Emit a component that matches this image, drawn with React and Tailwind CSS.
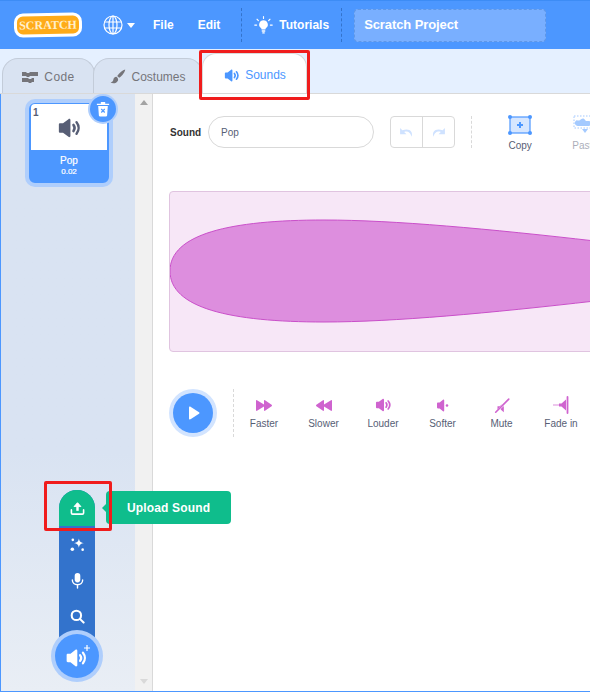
import React from 'react'

const Speaker = ({ className, color = 'currentColor' }) => (
  <svg viewBox="0 0 20 20" className={className} fill="none">
    <path d="M2.200 7.400c0-.6.400-1 1-1h2.200L9.600 3.200c.6-.5 1.500-.1 1.500.7v12.200c0 .8-.9 1.200-1.500.7l-4.200-3.200H3.200c-.6 0-1-.4-1-1z" fill={color} />
    <path d="M13.400 7.600c1.100 1.400 1.100 3.400 0 4.800" stroke={color} strokeWidth="1.900" strokeLinecap="round" />
    <path d="M15.800 5.600c2.100 2.600 2.100 6.200 0 8.800" stroke={color} strokeWidth="1.900" strokeLinecap="round" />
  </svg>
)

const Logo = () => (
  <div className="w-[68px] h-[24px] rounded-[9px] bg-[#ffab19] border-[3px] border-white flex items-center justify-center -rotate-1">
    <span className="text-[12px] leading-none font-bold text-[#fff0cc] font-['Liberation_Serif',serif]">SCRATCH</span>
  </div>
)

const Globe = () => (
  <svg viewBox="0 0 20 20" className="w-5 h-5" fill="none" stroke="white" strokeWidth="1.200">
    <circle cx="10" cy="10" r="9" />
    <ellipse cx="10" cy="10" rx="4" ry="9" />
    <path d="M10 1v18M1.500 7h17M1.500 13h17" />
  </svg>
)

const Bulb = () => (
  <svg viewBox="0 0 20 20" className="w-[19px] h-[19px]" fill="white">
    <path d="M10 4.400a4.600 4.600 0 0 0-2.700 8.300c.5.400.7.900.7 1.400h4c0-.5.200-1 .7-1.400A4.600 4.600 0 0 0 10 4.400z" />
    <rect x="8" y="15" width="4" height="1.500" rx=".7" />
    <rect x="8.600" y="17.200" width="2.800" height="1.300" rx=".6" />
    <path d="M10 .6v2M3.200 3.400l1.400 1.400M16.800 3.400l-1.400 1.400M.8 9.600h2M17.200 9.600h2" stroke="white" strokeWidth="1.200" strokeLinecap="round" />
  </svg>
)

const CodeIcon = () => (
  <svg viewBox="0 0 16 12" className="w-4 h-3" fill="#75757a">
    <path d="M0 1h4l1 1h2l1-1h8v4H8L7 6H5L4 5H0zM0 7h6l1 1h2l1-1h2v4h-2l-1 1H7l-1-1H0z" />
  </svg>
)

const BrushIcon = () => (
  <svg viewBox="0 0 16 16" className="w-4 h-4" fill="#75757a">
    <path d="M15.200.6c-2.400.6-6 3.200-8 6.400l2 1.800c3-2 5.800-5.600 6-8.200z" />
    <path d="M6.400 7.800c-2 .2-2.800 1.400-3 2.800-.2 1.400-1.200 2.600-2.800 3 2.400 1.200 6 .8 7.400-2.200.4-1-.2-2.800-1.600-3.600z" />
  </svg>
)

const effects = [
  {
    label: 'Faster',
    w: 'w-[60px]',
    icon: (
      <svg viewBox="0 0 16 11" className="w-[16px] h-[11px]" fill="#cf63cf">
        <path d="M0 .8C0 .2.500-.1 1 .2l7 4.300V.8C8 .2 8.500-.1 9 .2l6.600 4.500c.5.300.5 1.200 0 1.600L9 10.800c-.5.300-1 0-1-.6V6.500l-7 4.300c-.5.300-1 0-1-.6z" />
      </svg>
    ),
  },
  {
    label: 'Slower',
    w: 'w-[59px]',
    icon: (
      <svg viewBox="0 0 16 11" className="w-[16px] h-[11px]" fill="#cf63cf">
        <path d="M16 .8c0-.6-.5-.9-1-.6L8 4.500V.8C8 .2 7.500-.1 7 .2L.4 4.700c-.5.300-.5 1.200 0 1.600L7 10.800c.5.300 1 0 1-.6V6.500l7 4.300c.5.300 1 0 1-.6z" />
      </svg>
    ),
  },
  {
    label: 'Louder',
    w: 'w-[60px]',
    icon: <Speaker className="w-[18px] h-[18px]" color="#cf63cf" />,
  },
  {
    label: 'Softer',
    w: 'w-[59px]',
    icon: (
      <svg viewBox="0 0 12 13" className="w-[12px] h-[13px]" fill="#cf63cf">
        <path d="M0 4.400c0-.4.300-.8.800-.8h1.800L6 .7c.5-.4 1.200-.1 1.200.6v10.400c0 .7-.7 1-1.200.6L2.600 9.400H.8c-.5 0-.8-.4-.8-.8z" />
        <circle cx="10" cy="6.500" r="1.300" />
      </svg>
    ),
  },
  {
    label: 'Mute',
    w: 'w-[59px]',
    icon: (
      <svg viewBox="0 0 20 20" className="w-[18px] h-[18px]">
        <path d="M5 11.500h2.400L10.500 8.500 5 15z" fill="#cf63cf" />
        <path d="M9 14l3-3v7l-3.500-3z" fill="#cf63cf" />
        <path d="M3 18L17.500 3.500" stroke="#cf63cf" strokeWidth="1.800" strokeLinecap="round" />
      </svg>
    ),
  },
  {
    label: 'Fade in',
    w: 'w-[60px]',
    icon: (
      <svg viewBox="0 0 18 18" className="w-[18px] h-[18px]">
        <path d="M1 9h6" stroke="#e7b4e7" strokeWidth="1.500" />
        <path d="M7 7.500h2.500L14 3.500v11l-4.500-4H7z" fill="#cf63cf" />
        <path d="M15.500 1v16" stroke="#cf63cf" strokeWidth="1.800" strokeLinecap="round" />
      </svg>
    ),
  },
]

const App = () => {
  return (
    <div className="relative w-[590px] h-[692px] overflow-hidden bg-white font-['Liberation_Sans',Arial,sans-serif] flex flex-col">
      {/* menu bar */}
      <header className="h-[49px] shrink-0 bg-[#4c97ff] border-t border-[#3d8cf5] flex items-center text-white font-bold text-[12px]">
        <div className="ml-[14px] w-[68px] flex justify-center"><Logo /></div>
        <div className="ml-[21px] flex items-center gap-[4px]">
          <Globe />
          <span className="w-0 h-0 border-x-[4px] border-x-transparent border-t-[5px] border-t-white" />
        </div>
        <span className="ml-[18px]">File</span>
        <span className="ml-[24px]">Edit</span>
        <div className="ml-[21px] h-[34px] border-l border-dashed border-[#3373cc]" />
        <div className="ml-[12px] flex items-center gap-[6px]">
          <Bulb />
          <span>Tutorials</span>
        </div>
        <div className="ml-[12px] h-[34px] border-l border-dashed border-[#3373cc]" />
        <div className="ml-[12px] w-[192px] h-[33px] rounded-[4px] bg-[#79afff] border border-dashed border-[#5f97e6] flex items-center pl-[9px] text-[13px] tracking-[-0.1px]">Scratch Project</div>
      </header>

      {/* tabs */}
      <div className="h-[45px] shrink-0 bg-[#e5f0ff] flex items-end pl-[2px] border-b border-[#d9d9d9] text-[12px]">
        <div className="w-[93px] h-[35px] bg-[#d9e3f2] border border-b-0 border-[#c3ccd9] rounded-t-[16px] flex items-center justify-center gap-[6px] text-[#75757a] pt-[1px]">
          <CodeIcon />
          <span className="tracking-[0.4px]">Code</span>
        </div>
        <div className="w-[110px] h-[35px] -ml-[2px] bg-[#d9e3f2] border border-b-0 border-[#c3ccd9] rounded-t-[16px] flex items-center justify-center gap-[5px] text-[#75757a] pt-[1px]">
          <BrushIcon />
          <span>Costumes</span>
        </div>
        <div className="w-[105px] h-[40px] -ml-[1px] bg-white border border-b-0 border-[#d9d9d9] rounded-t-[14px] flex items-center justify-center gap-[5px] text-[#4c97ff] pt-[3px]">
          <Speaker className="w-[17px] h-[17px]" color="#4c97ff" />
          <span>Sounds</span>
        </div>
      </div>

      <div className="flex-1 flex min-h-0 border-b border-[#4c97ff]">
        {/* sound list */}
        <aside className="relative w-[135px] shrink-0 bg-gradient-to-b from-[#d9e3f2] from-60% to-[#e9eef5] border-l border-[#4c97ff]">
          <div className="ml-[24px] mt-[5px] w-[88px] h-[88px] rounded-[10px] bg-[#4c97ff] border-[4px] border-[#afcefc] flex flex-col">
            <div className="relative mx-[2px] mt-[1px] h-[46px] bg-white flex items-center justify-center rounded-t-[4px]">
              <span className="absolute left-[2px] top-[4px] text-[10px] leading-none font-bold text-[#575e75]">1</span>
              <Speaker className="w-[26px] h-[26px] mt-[1px]" color="#575e75" />
            </div>
            <div className="flex-1 flex flex-col items-center justify-center text-white pb-[2px] [-webkit-text-stroke:0.2px_white]">
              <span className="text-[10px] leading-[12px]">Pop</span>
              <span className="text-[8px] leading-[10px]">0.02</span>
            </div>
          </div>

          {/* delete badge */}
          <div className="absolute left-[89px] top-[2px] w-[26px] h-[26px] rounded-full bg-[#4c97ff] ring-[2px] ring-[#afcefc] flex items-center justify-center">
            <svg viewBox="0 0 16 18" className="w-[14px] h-[16px]" fill="white">
              <path d="M1 3h14v1.500H1zM5.500 1h5v2h-5z" />
              <path d="M2.500 5.500h11l-.8 11c0 .5-.5 1-1 1H4.300c-.5 0-1-.5-1-1z" />
              <path d="M6 9l4 4M10 9l-4 4" stroke="#4c97ff" strokeWidth="1.400" />
            </svg>
          </div>

          {/* add sound menu */}
          <div className="absolute left-[58px] bottom-[41px] w-[36px] h-[160px] rounded-t-[18px] overflow-hidden bg-[#3373cc] flex flex-col items-center text-white">
            <div className="w-full h-[36px] shrink-0 bg-[#0fbd8c] flex items-center justify-center">
              <svg viewBox="0 0 16 16" className="w-[15px] h-[15px] mt-[1px]" fill="none" stroke="white" strokeWidth="1.700" strokeLinecap="round" strokeLinejoin="round">
                <path d="M1.500 9.500v3.200c0 .8.600 1.300 1.300 1.300h10.400c.7 0 1.300-.5 1.300-1.300V9.500" />
                <path d="M8 10.500V3" strokeWidth="2.600" strokeLinecap="butt" />
                <path d="M4.600 5.600L8 1.800l3.400 3.800z" fill="white" strokeWidth="1" />
              </svg>
            </div>
            <div className="w-full h-[36px] shrink-0 flex items-center justify-center">
              <svg viewBox="0 0 16 16" className="w-[15px] h-[15px]" fill="white">
                <path d="M9.500 1.500c.6 3.200 1.800 4.300 5.500 5-3.700.7-4.900 1.800-5.500 5-.6-3.200-1.800-4.300-5.500-5 3.700-.7 4.900-1.800 5.500-5z" />
                <circle cx="3" cy="3" r="1.400" />
                <circle cx="2.500" cy="13" r="1.900" />
                <circle cx="13.500" cy="13.500" r="1.400" />
              </svg>
            </div>
            <div className="w-full h-[36px] shrink-0 flex items-center justify-center">
              <svg viewBox="0 0 16 18" className="w-[15px] h-[17px]" fill="none" stroke="white" strokeWidth="1.500" strokeLinecap="round">
                <rect x="5" y="1" width="6" height="10" rx="3" fill="white" stroke="none" />
                <path d="M2.500 8.500c0 3 2.400 5 5.500 5s5.500-2 5.500-5M8 13.500V17" />
              </svg>
            </div>
            <div className="w-full h-[36px] shrink-0 flex items-center justify-center">
              <svg viewBox="0 0 16 16" className="w-[15px] h-[15px]" fill="none" stroke="white" strokeWidth="2.200" strokeLinecap="round">
                <circle cx="6.800" cy="6.800" r="5" />
                <path d="M10.800 10.800L14.500 14.500" />
              </svg>
            </div>
          </div>
          <div className="absolute left-[54px] bottom-[13px] w-[44px] h-[44px] rounded-full bg-[#4c97ff] ring-[4px] ring-[#afcefc] flex items-center justify-center">
            <Speaker className="w-[24px] h-[24px] mt-[3px] -ml-[3px]" color="white" />
            <svg viewBox="0 0 10 10" className="absolute right-[9px] top-[11px] w-[6px] h-[6px]" fill="white">
              <path d="M4 0h2v4h4v2H6v4H4V6H0V4h4z" />
            </svg>
          </div>
        </aside>

        {/* scrollbar */}
        <div className="w-[18px] shrink-0 bg-[#f1f1f1] border-r border-[#d9d9d9] flex flex-col items-center justify-between pt-[6px] pb-[7px]">
          <span className="w-0 h-0 border-x-[4px] border-x-transparent border-b-[5px] border-b-[#a3a3a3]" />
          <span className="w-0 h-0 border-x-[4px] border-x-transparent border-t-[5px] border-t-[#d9d9d9]" />
        </div>

        {/* editor */}
        <main className="flex-1 min-w-0 overflow-hidden pl-[17px] text-[#575e75]">
          <div className="mt-[22px] h-[32px] flex items-center">
            <span className="shrink-0 text-[10px] font-bold text-[#333]">Sound</span>
            <div className="shrink-0 ml-[7px] w-[166px] h-[32px] rounded-full border border-[#d9d9d9] flex items-center pl-[12px] text-[10px]">Pop</div>
            <div className="shrink-0 ml-[16px] w-[65px] h-[32px] rounded-[4px] border border-[#d9d9d9] flex">
              <div className="flex-1 border-r border-[#d9d9d9] flex items-center justify-center">
                <svg viewBox="0 0 16 12" className="w-[15px] h-[11px]" fill="#cfe2ff"><path d="M1 1v7h7L5.500 5.500C8 4.300 12 5 13.500 10.500c2-5-2-10-10-7z" /></svg>
              </div>
              <div className="flex-1 flex items-center justify-center">
                <svg viewBox="0 0 16 12" className="w-[15px] h-[11px]" fill="#cfe2ff"><path d="M15 1v7H8l2.500-2.500C8 4.300 4 5 2.500 10.500c-2-5 2-10 10-7z" /></svg>
              </div>
            </div>
            <div className="shrink-0 ml-[16px] h-[32px] border-l border-dashed border-[#d9d9d9]" />
            <div className="ml-[35px] mt-[3px] w-[26px] flex flex-col items-center shrink-0">
              <svg viewBox="0 0 24 20" className="w-[24px] h-[20px]" fill="none">
                <rect x="2" y="2" width="20" height="16" fill="#d6e6ff" stroke="#4c97ff" strokeWidth="1.200" />
                <path d="M12 7v6M9 10h6" stroke="#4c97ff" strokeWidth="2" />
                {[[2, 2], [22, 2], [2, 18], [22, 18]].map(([cx, cy]) => <circle key={cx + '-' + cy} cx={cx} cy={cy} r="2" fill="#4c97ff" />)}
              </svg>
              <span className="mt-[5px] text-[10px] leading-[12px]">Copy</span>
            </div>
            <div className="ml-[39px] mt-[3px] w-[26px] flex flex-col items-center shrink-0 opacity-50">
              <svg viewBox="0 0 24 20" className="w-[24px] h-[20px]" fill="none">
                <rect x="1" y="1" width="22" height="12" stroke="#4c97ff" strokeWidth="1" strokeDasharray="1.500 1.500" />
                <path d="M2 7c2-4 3 0 5-2s4-2 5 0 4 0 6 2-1 4-3 4H5c-2 0-4-2-3-4z" fill="#4c97ff" />
                <path d="M9 14h6l-3 4z" fill="#4c97ff" />
              </svg>
              <span className="mt-[5px] text-[10px] leading-[12px] whitespace-nowrap">Paste</span>
            </div>
          </div>

          {/* wave form */}
          <div className="mt-[43px] -ml-[1px] w-[600px] h-[161px] rounded-[4px] bg-[#f7e7f7] border border-[#e0c4e0] overflow-hidden">
            <svg viewBox="0 0 600 161" className="w-[600px] h-[161px] block">
              <path
                d="M0 79C0 42 60 28 154 28C224 28 320 37 425 49L600 67V91L425 109C320 121 224 130 154 130C60 130 0 116 0 79Z"
                fill="#dd8ede"
                stroke="#c94fc9"
                strokeWidth="1"
              />
            </svg>
          </div>

          {/* play + effects */}
          <div className="mt-[37px] h-[48px] flex items-center">
            <div className="w-[40px] h-[40px] rounded-full bg-[#4c97ff] ring-[4px] ring-[#d2e4ff] flex items-center justify-center ml-[3px] shrink-0">
              <svg viewBox="0 0 12 14" className="w-[12px] h-[14px] ml-[2px]" fill="white"><path d="M1 1.500c0-.8.800-1.200 1.500-.8l8.500 5.500c.6.400.6 1.200 0 1.600l-8.500 5.500c-.7.400-1.500 0-1.500-.8z" /></svg>
            </div>
            <div className="ml-[20px] h-[48px] border-l border-dashed border-[#d9d9d9] shrink-0" />
            <div className="flex">
              {effects.map(e => (
                <div key={e.label} className={`${e.w} shrink-0 flex flex-col items-center`}>
                  <div className="h-[18px] flex items-center justify-center">{e.icon}</div>
                  <span className="mt-[4px] text-[10px] leading-[12px] whitespace-nowrap">{e.label}</span>
                </div>
              ))}
            </div>
          </div>
        </main>
      </div>

      {/* upload tooltip */}
      <div className="absolute left-[106px] top-[491px] w-[125px] h-[33px] rounded-[4px] bg-[#0fbd8c] flex items-center pl-[21px] text-white text-[12px] font-bold tracking-[0.15px]">
        <span className="absolute -left-[4px] top-[13px] w-0 h-0 border-y-[4px] border-y-transparent border-r-[4px] border-r-[#0fbd8c]" />
        Upload Sound
      </div>

      {/* red annotation boxes */}
      <div className="absolute left-[199px] top-[50px] w-[111px] h-[50px] border-[3px] border-[#f01c1c] rounded-[2px]" />
      <div className="absolute left-[44px] top-[481px] w-[68px] h-[50px] border-[3px] border-[#f01c1c] rounded-[2px]" />
    </div>
  )
}

export default App
